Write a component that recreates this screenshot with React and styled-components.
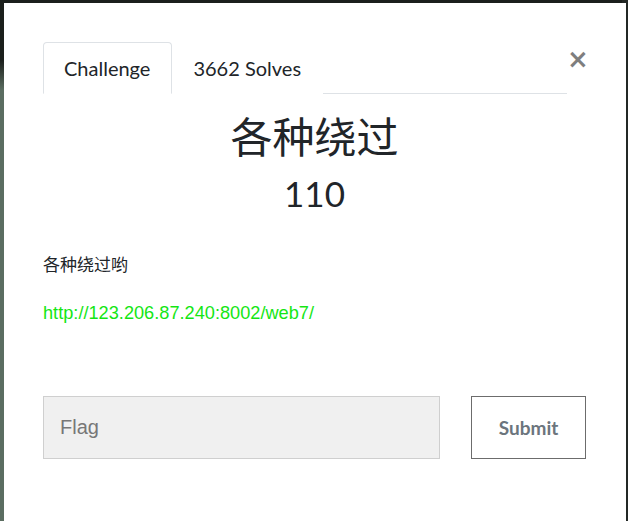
import React, { useState } from "react";
import styled, { createGlobalStyle } from "styled-components";

const GlobalStyle = createGlobalStyle`
  html, body {
    margin: 0;
    padding: 0;
    height: 100%;
  }
  body {
    background: linear-gradient(180deg, #1b1f1c 0px, #1b1f1c 60px, #5b6d61 90px, #5b6d61 100%);
    overflow: hidden;
    font-family: Lato, "Noto Sans CJK SC", sans-serif;
    color: #212529;
  }
`;

const Backdrop = styled.div`
  display: flex;
  padding: 3px 2px 0 4px;
  height: 521px;
  box-sizing: border-box;
  background: linear-gradient(90deg, transparent 0, transparent 622px, #232825 622px);
`;

const Modal = styled.div`
  flex: 1;
  background: #fff;
  padding: 39px 40px 0 39px;
  display: flex;
  flex-direction: column;
`;

const Header = styled.div`
  display: flex;
  align-items: flex-start;
`;

const Nav = styled.div`
  flex: 1;
  display: flex;
  border-bottom: 1px solid #dee2e6;
`;

const Tab = styled.button`
  font-family: Lato, sans-serif;
  font-size: 20px;
  line-height: 29px;
  padding: 11px 21px 10px 20px;
  margin-bottom: -1px;
  background: #fff;
  color: #212529;
  border: 1px solid ${({ $active }) => ($active ? "#dee2e6" : "transparent")};
  border-bottom-color: ${({ $active }) => ($active ? "#fff" : "transparent")};
  border-radius: 4px 4px 0 0;
  cursor: pointer;
`;

const Close = styled.button`
  width: 19px;
  margin-top: 4px;
  padding: 0;
  border: none;
  background: none;
  font-family: "DejaVu Sans", sans-serif;
  font-size: 26px;
  font-weight: 700;
  line-height: 1;
  color: #000;
  opacity: 0.5;
  text-align: right;
  cursor: pointer;
`;

const Title = styled.h1`
  margin: 18px 0 0;
  text-align: center;
  font-family: Lato, "Noto Sans CJK SC", sans-serif;
  font-weight: 400;
  font-size: 42px;
  line-height: 1.2;
`;

const Points = styled.h2`
  margin: 10px 0 0;
  text-align: center;
  font-family: Lato, sans-serif;
  font-weight: 400;
  font-size: 35px;
  line-height: 1.2;
`;

const Description = styled.p`
  margin: 38px 0 0;
  font-family: Lato, "Noto Sans CJK SC", sans-serif;
  font-size: 17px;
  line-height: 1.5;
`;

const Link = styled.a`
  display: block;
  margin-top: 22px;
  font-family: "Liberation Sans", Arial, sans-serif;
  font-size: 18.2px;
  line-height: 1.5;
  color: #14e614;
  text-decoration: none;
`;

const FormRow = styled.form`
  display: grid;
  grid-template-columns: 1fr 115px;
  gap: 31px;
  margin-top: 69px;
`;

const FlagInput = styled.input`
  height: 63px;
  box-sizing: border-box;
  padding: 0 16px;
  background: #f0f0f0;
  border: 1px solid #cfcfcf;
  font-family: "Liberation Sans", Arial, sans-serif;
  font-size: 20px;
  color: #333;
  outline: none;
  &::placeholder {
    color: #777;
  }
`;

const SubmitButton = styled.button`
  height: 63px;
  background: #fff;
  border: 1px solid #6c6c6c;
  font-family: Lato, sans-serif;
  font-weight: 700;
  font-size: 19px;
  color: #6c757d;
  cursor: pointer;
`;

export default function App() {
  const [tab, setTab] = useState("challenge");
  const [flag, setFlag] = useState("");

  return (
    <>
      <GlobalStyle />
      <Backdrop>
        <Modal>
          <Header>
            <Nav>
              <Tab $active={tab === "challenge"} onClick={() => setTab("challenge")}>
                Challenge
              </Tab>
              <Tab $active={tab === "solves"} onClick={() => setTab("solves")}>
                3662 Solves
              </Tab>
            </Nav>
            <Close aria-label="Close">×</Close>
          </Header>
          <Title>各种绕过</Title>
          <Points>110</Points>
          <Description>各种绕过哟</Description>
          <Link href="#">http://123.206.87.240:8002/web7/</Link>
          <FormRow onSubmit={(e) => e.preventDefault()}>
            <FlagInput
              placeholder="Flag"
              value={flag}
              onChange={(e) => setFlag(e.target.value)}
            />
            <SubmitButton type="submit">Submit</SubmitButton>
          </FormRow>
        </Modal>
      </Backdrop>
    </>
  );
}
